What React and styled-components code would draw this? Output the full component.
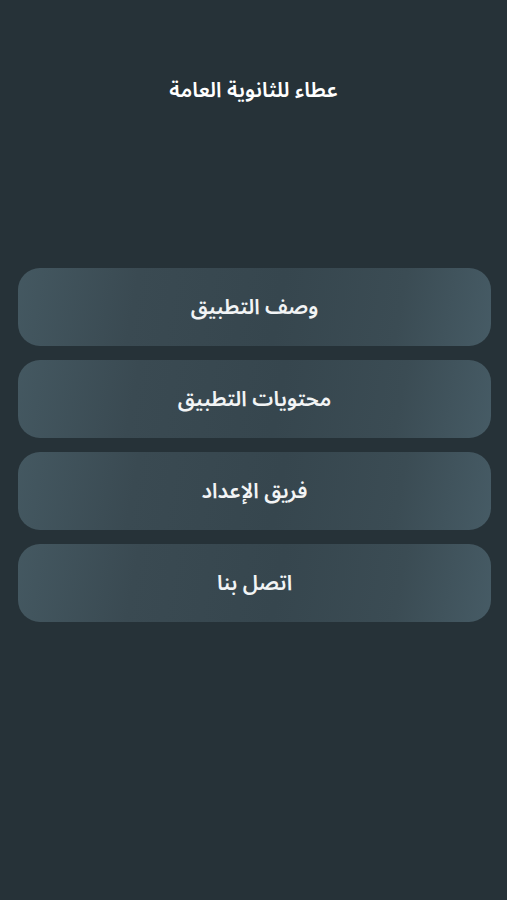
import React from "react";
import styled, { createGlobalStyle } from "styled-components";

const Global = createGlobalStyle`
  html, body { margin: 0; padding: 0; background: #263238; }
  body { font-family: "Noto Sans Arabic", "Noto Sans", "DejaVu Sans", sans-serif; }
`;

const Page = styled.div`
  width: 507px;
  height: 900px;
  background: #263238;
  direction: rtl;
  display: flex;
  flex-direction: column;
`;

const Header = styled.header`
  height: 182px;
  display: flex;
  justify-content: center;
  padding-top: 75px;
  box-sizing: border-box;
`;

const Title = styled.h1`
  margin: 0;
  font-size: 21px;
  line-height: 30px;
  font-weight: 600;
  color: #ffffff;
`;

const Menu = styled.nav`
  margin-top: 86px;
  padding: 0 16px 0 18px;
  display: flex;
  flex-direction: column;
  gap: 14px;
`;

const MenuButton = styled.button`
  height: 78px;
  border: none;
  border-radius: 22px;
  background: linear-gradient(100deg, #445861 0%, #3a4a52 25%, #36464e 55%, #3b4c54 80%, #465b65 100%);
  color: #f2f4f5;
  font-family: inherit;
  font-size: 21px;
  font-weight: 600;
  display: flex;
  align-items: center;
  justify-content: center;
  cursor: pointer;
  padding: 0;
`;

const items = ["وصف التطبيق", "محتويات التطبيق", "فريق الإعداد", "اتصل بنا"];

export default function App() {
  return (
    <Page>
      <Global />
      <Header>
        <Title>عطاء للثانوية العامة</Title>
      </Header>
      <Menu>
        {items.map((t) => (
          <MenuButton key={t}>{t}</MenuButton>
        ))}
      </Menu>
    </Page>
  );
}
